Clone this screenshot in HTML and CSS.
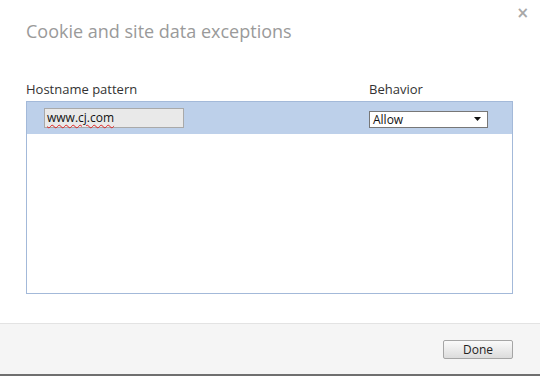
FILE: index.html
```html
<!DOCTYPE html>
<html>
<head>
<meta charset="utf-8">
<link rel="stylesheet" href="styles.css">
</head>
<body>
<div class="dialog">
  <div class="header">
    <h1 class="title">Cookie and site data exceptions</h1>
    <span class="close">&#215;</span>
  </div>
  <div class="content">
    <div class="cols">
      <span class="col-host">Hostname pattern</span>
      <span class="col-beh">Behavior</span>
    </div>
    <div class="list">
      <div class="row selected">
        <div class="host-cell"><div class="host-input"><span class="misspelled">www.cj.com</span></div></div>
        <div class="select">
          <span>Allow</span>
          <svg class="arrow" width="7" height="4" viewBox="0 0 7 4"><path d="M0 0H7L3.5 4Z" fill="#111"/></svg>
        </div>
      </div>
    </div>
  </div>
  <div class="footer">
    <button class="btn">Done</button>
  </div>
</div>
</body>
</html>
```
FILE: styles.css
```css
html, body {
  margin: 0;
  padding: 0;
  background: #fff;
}
body {
  font-family: "Open Sans", "Noto Sans", sans-serif;
  color: #333;
}
.dialog {
  width: 540px;
  height: 376px;
  display: flex;
  flex-direction: column;
  box-sizing: border-box;
  border-bottom: 2px solid #6f6f6f;
}
.header {
  display: flex;
  justify-content: space-between;
  align-items: flex-start;
  padding: 0 11px 0 26px;
}
.title {
  margin: 19px 0 0 0;
  font-size: 18px;
  font-weight: normal;
  line-height: 24px;
  color: #9a9a9a;
  letter-spacing: 0;
}
.close {
  margin-top: 5px;
  font-size: 15px;
  line-height: 16px;
  color: #a8a8a8;
  font-family: "DejaVu Sans", sans-serif;
  font-weight: bold;
}
.content {
  flex: 1;
  padding: 0 27px 0 26px;
}
.cols {
  display: flex;
  margin-top: 37px;
  font-size: 13px;
  line-height: 18px;
  color: #333;
}
.col-host {
  width: 343px;
}
.list {
  margin-top: 3px;
  height: 193px;
  box-sizing: border-box;
  border: 1px solid #a3b9d9;
  background: #fff;
}
.row {
  display: flex;
  align-items: center;
  height: 32px;
  box-sizing: border-box;
}
.selected {
  background: #bdd0ea;
}
.host-cell {
  width: 342px;
  padding-left: 17px;
  box-sizing: border-box;
}
.host-input {
  width: 140px;
  height: 20px;
  box-sizing: border-box;
  border: 1px solid #a9a9a9;
  background: #e9e9e9;
  font-size: 12px;
  line-height: 18px;
  padding-left: 2px;
  color: #111;
}
.misspelled {
  text-decoration: underline wavy #d22;
  text-decoration-thickness: 1px;
  text-underline-offset: 2px;
}
.select {
  width: 119px;
  height: 17px;
  box-sizing: border-box;
  border: 1px solid #777;
  background: #fff;
  display: flex;
  align-items: center;
  justify-content: space-between;
  padding: 0 6px 0 3px;
  font-size: 12px;
  line-height: 15px;
  color: #111;
  margin-top: 2px;
}
.footer {
  height: 51px;
  box-sizing: border-box;
  border-top: 1px solid #e3e3e3;
  background: #f5f5f5;
  display: flex;
  justify-content: flex-end;
  align-items: flex-start;
  padding: 16px 27px 0 0;
}
.btn {
  width: 70px;
  height: 19px;
  box-sizing: border-box;
  border: 1px solid #a5a5a5;
  border-radius: 2px;
  background: linear-gradient(#fafafa, #dcdcdc);
  font-family: "Open Sans", "Noto Sans", sans-serif;
  font-size: 12px;
  line-height: 15px;
  color: #222;
  padding: 0;
}
```
